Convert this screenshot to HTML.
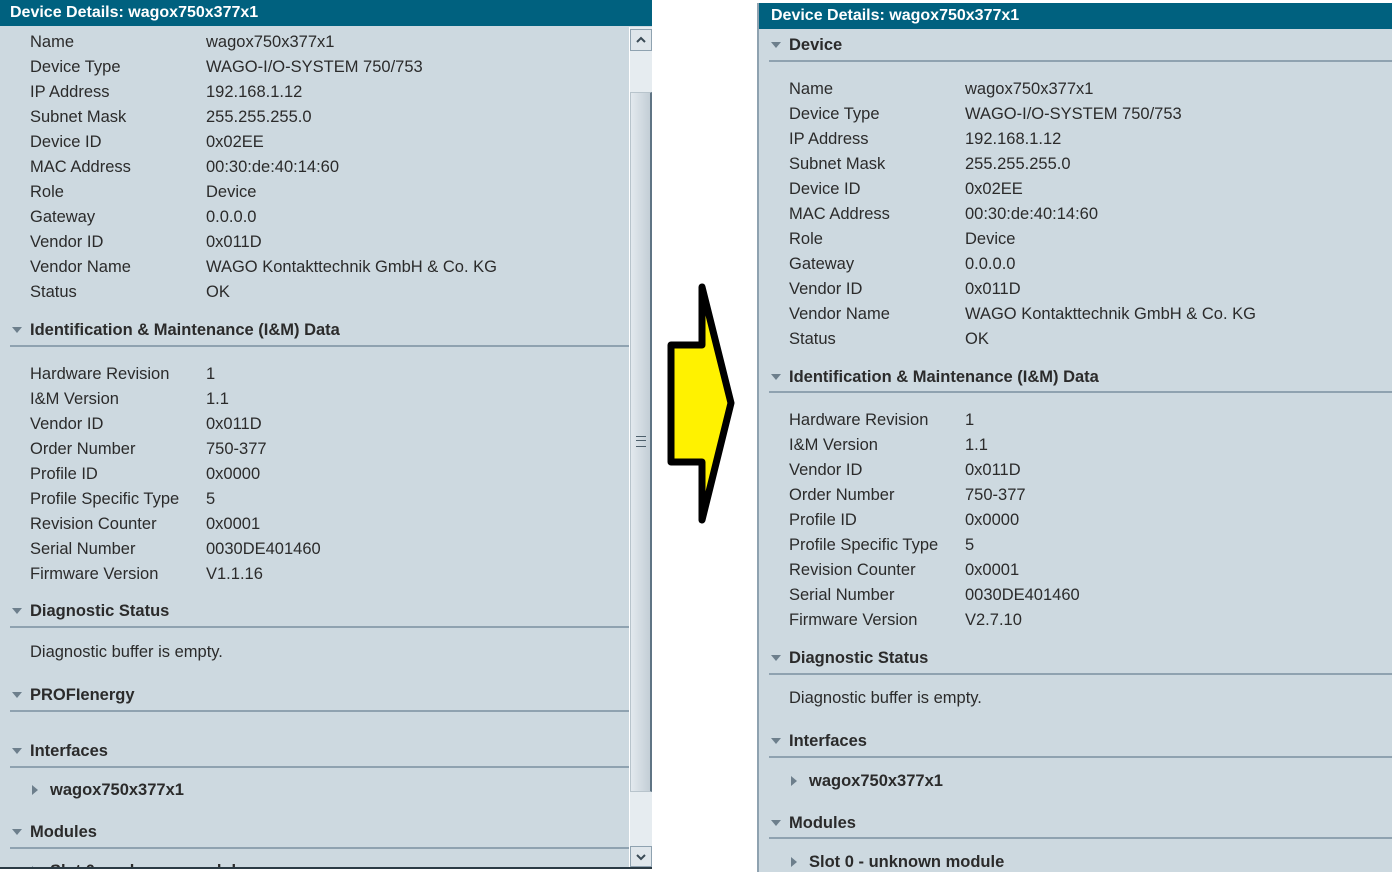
<!DOCTYPE html><html><head><style>
body{margin:0;width:1392px;height:872px;background:#fff;position:relative;overflow:hidden;font-family:"Liberation Sans",sans-serif;color:#2b2b2b}
.p{position:absolute;background:#cdd9e0;overflow:hidden}
.h{position:absolute;left:0;right:0;height:26px;background:#00617f;color:#fff;font-weight:bold;font-size:16px;line-height:26px;padding-left:10px}
.t{position:absolute;font-size:16.5px;white-space:nowrap;line-height:20px}
.b{font-weight:bold}
.l{position:absolute;height:2px;background:#8fa2b0}
.tri{position:absolute;width:0;height:0;border-left:5px solid transparent;border-right:5px solid transparent;border-top:6px solid #6d7f8c}
.rt{position:absolute;width:0;height:0;border-top:5px solid transparent;border-bottom:5px solid transparent;border-left:6px solid #6d7f8c}
</style></head><body>
<div class="p" style="left:0;top:0;width:652px;height:867px;border-bottom:2px solid #2a3a44">
<div class="h" style="top:0">Device Details: wagox750x377x1</div>
<div id="L"></div>
<div style="position:absolute;left:629px;top:27px;width:23px;height:840px;background:#e6ecf0;border-left:1px solid #fff"></div>
<div style="position:absolute;left:630px;top:29px;width:20px;height:20px;border:1px solid #8fa2b0;background:#dfe6eb"><svg width="20" height="20"><path d="M6 12 L10 8 L14 12" fill="none" stroke="#3a4a55" stroke-width="2"/></svg></div>
<div style="position:absolute;left:630px;top:92px;width:19px;height:698px;background:linear-gradient(90deg,#e3e9ee,#c3ced6);border:1px solid #b8c4cc;border-right:2px solid #5f7484"></div>
<div style="position:absolute;left:636px;top:436px;width:10px;height:9px;border-top:1px solid #4d5f6b;border-bottom:1px solid #4d5f6b"><div style="margin-top:3px;border-top:1px solid #4d5f6b"></div></div>
<div style="position:absolute;left:630px;top:846px;width:20px;height:19px;border:1px solid #8fa2b0;background:#dfe6eb"><svg width="20" height="19"><path d="M6 8 L10 12 L14 8" fill="none" stroke="#3a4a55" stroke-width="2"/></svg></div>
</div>
<svg style="position:absolute;left:660px;top:275px" width="90" height="260"><polygon points="42,12 71,128 42,245 42,187 11,187 11,70 42,70" fill="#fff200" stroke="#000" stroke-width="7" stroke-linejoin="round"/></svg>
<div class="p" style="left:757px;top:3px;width:635px;height:869px;border-left:2px solid #8fa2b0">
<div class="h" style="top:0;padding-left:12px">Device Details: wagox750x377x1</div>
<div id="R"></div>
</div>
<script>
function build(id,dx,dy,items){var e=document.getElementById(id),h='';items.forEach(function(it){var y=it[1]-10-dy;
if(it[0]=='s'){h+='<div class="tri" style="left:'+(12+dx)+'px;top:'+(y+7)+'px"></div><div class="t b" style="left:'+(30+dx)+'px;top:'+y+'px">'+it[2]+'</div><div class="l" style="left:'+(10+dx)+'px;right:'+(id=='L'?23:0)+'px;top:'+(it[3]-dy)+'px"></div>';}
else if(it[0]=='r'){h+='<div class="t" style="left:'+(30+dx)+'px;top:'+y+'px">'+it[2]+'</div><div class="t" style="left:'+(206+dx)+'px;top:'+y+'px">'+it[3]+'</div>';}
else if(it[0]=='x'){h+='<div class="t" style="left:'+(30+dx)+'px;top:'+y+'px">'+it[2]+'</div>';}
else {h+='<div class="rt" style="left:'+(32+dx)+'px;top:'+(y+5)+'px"></div><div class="t b" style="left:'+(50+dx)+'px;top:'+y+'px">'+it[2]+'</div>';}});e.innerHTML=h;}
var dev=[["Name","wagox750x377x1"],["Device Type","WAGO-I/O-SYSTEM 750/753"],["IP Address","192.168.1.12"],["Subnet Mask","255.255.255.0"],["Device ID","0x02EE"],["MAC Address","00:30:de:40:14:60"],["Role","Device"],["Gateway","0.0.0.0"],["Vendor ID","0x011D"],["Vendor Name","WAGO Kontakttechnik GmbH &amp; Co. KG"],["Status","OK"]];
function im(fw){return [["Hardware Revision","1"],["I&amp;M Version","1.1"],["Vendor ID","0x011D"],["Order Number","750-377"],["Profile ID","0x0000"],["Profile Specific Type","5"],["Revision Counter","0x0001"],["Serial Number","0030DE401460"],["Firmware Version",fw]];}
var L=[];dev.forEach(function(d,i){L.push(['r',41+25*i,d[0],d[1]])});
L.push(['s',329,'Identification &amp; Maintenance (I&amp;M) Data',344]);
im('V1.1.16').forEach(function(d,i){L.push(['r',373+25*i,d[0],d[1]])});
L.push(['s',610,'Diagnostic Status',625],['x',651,'Diagnostic buffer is empty.'],['s',694,'PROFIenergy',709],['s',750,'Interfaces',765],['c',789,'wagox750x377x1'],['s',831,'Modules',846],['c',870,'Slot 0 - unknown module']);
build('L',0,-1,L);
var R=[['s',44,'Device',59]];dev.forEach(function(d,i){R.push(['r',88+25*i,d[0],d[1]])});
R.push(['s',376,'Identification &amp; Maintenance (I&amp;M) Data',390]);
im('V2.7.10').forEach(function(d,i){R.push(['r',419+25*i,d[0],d[1]])});
R.push(['s',657,'Diagnostic Status',672],['x',697,'Diagnostic buffer is empty.'],['s',740,'Interfaces',755],['c',780,'wagox750x377x1'],['s',822,'Modules',836],['c',861,'Slot 0 - unknown module']);
build('R',0,2,R);
</script>
</body></html>
